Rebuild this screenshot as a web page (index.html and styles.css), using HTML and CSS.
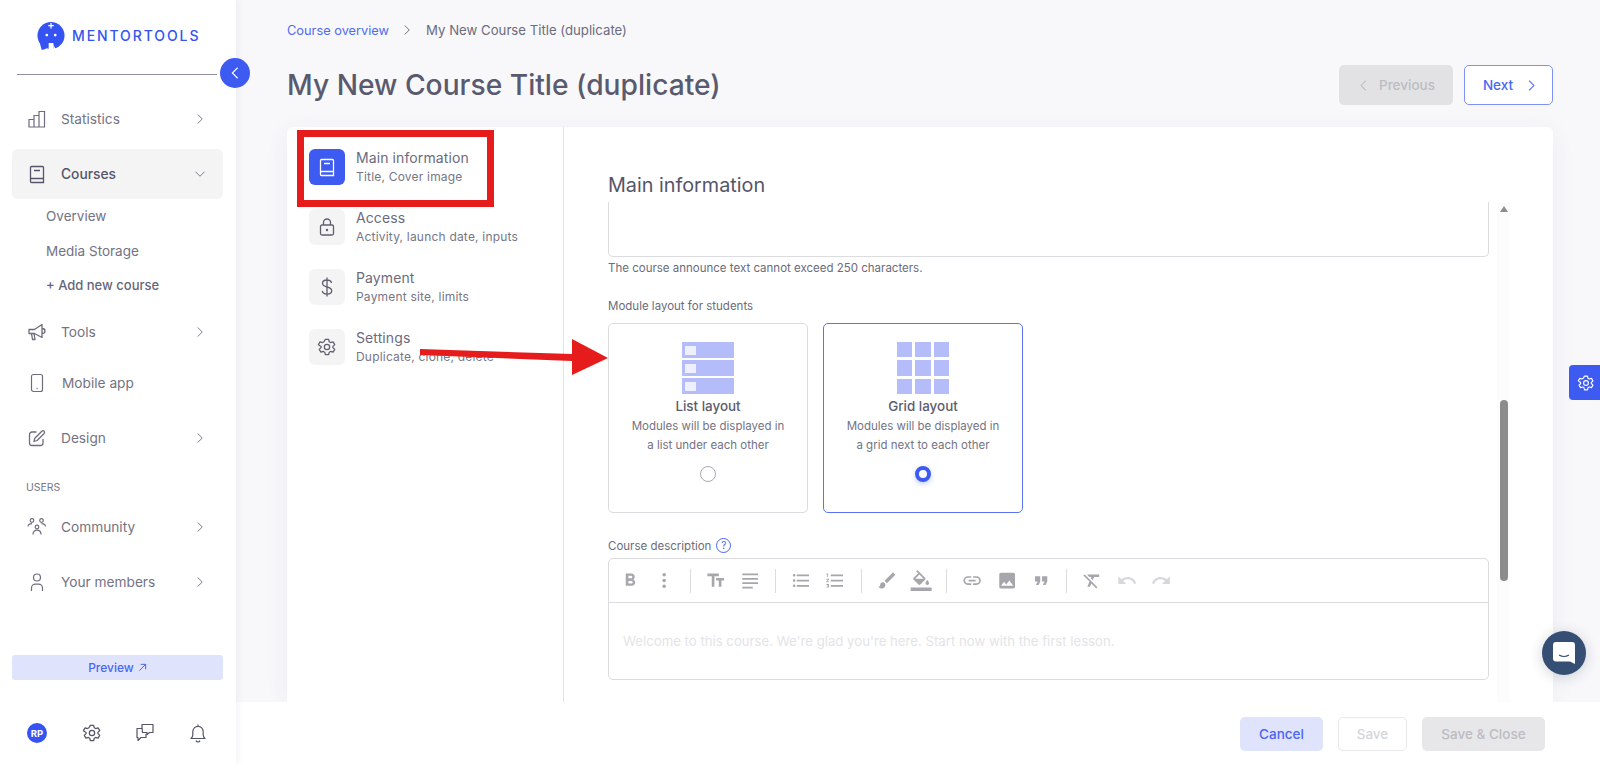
FILE: index.html
```html
<!DOCTYPE html>
<html lang="en">
<head>
    <meta charset="UTF-8">
    <meta name="viewport" content="width=device-width, initial-scale=1.0">
    <title>My New Course Title (duplicate)</title>
    <link rel="stylesheet" href="styles.css">
</head>
<body>
    <svg class="sprite" xmlns="http://www.w3.org/2000/svg">
        <symbol id="chev-right" viewBox="0 0 16 16"><path d="M5 2 11 8l-6 6" fill="none" stroke="currentColor" stroke-width="1.300"/></symbol>
        <symbol id="chev-left" viewBox="0 0 16 16"><path d="M11 2 5 8l6 6" fill="none" stroke="currentColor" stroke-width="1.300"/></symbol>
        <symbol id="chev-down" viewBox="0 0 16 16"><path d="M2 5 8 11l6-6" fill="none" stroke="currentColor" stroke-width="1.300"/></symbol>
        <symbol id="gear" viewBox="0 0 24 24"><g fill="none" stroke="currentColor" stroke-width="1.500" stroke-linejoin="round"><path d="M10 2.800h4l.7 2.900 1.700 1 2.900-.9 2 3.400-2.200 2.100v1.400l2.200 2.100-2 3.400-2.900-.9-1.700 1-.7 2.900h-4l-.7-2.900-1.700-1-2.900.9-2-3.400 2.200-2.100v-1.400L1.700 9.200l2-3.400 2.900.9 1.700-1z"/><circle cx="12" cy="12" r="3.200"/></g></symbol>
    </svg>

    <aside class="sidebar">
        <div class="logo-row">
            <svg class="logo-icon" viewBox="0 0 30 30" width="28" height="28">
                <circle cx="15" cy="14.500" r="14.500" fill="#3453f2"/>
                <path d="M2.500 20 L5 30 C10 29 12.500 27 13 24z" fill="#3453f2"/>
                <path d="M15 1v6M12 3.800h6" stroke="#fff" stroke-width="1.400"/>
                <circle cx="10.500" cy="14" r="1.500" fill="#fff"/>
                <circle cx="19.500" cy="14" r="1.500" fill="#fff"/>
                <path d="M12.500 22.500h5V30h-5z" fill="#fff"/>
                <path d="M17.500 22.500c.2 3 1.500 5 3 6.500l-3 1z" fill="#fff"/>
            </svg>
            <span class="logo-text">MENTORTOOLS</span>
        </div>
        <div class="side-rule"></div>

        <nav class="nav">
            <a class="nav-item">
                <svg class="nav-icon" viewBox="0 0 20 20"><path d="M2 10.500h5V18H2zM7 6.500h5V18H7zM12 2.500h5.500V18H12z" fill="none" stroke="currentColor" stroke-width="1.200"/></svg>
                <span class="nav-label">Statistics</span>
                <svg class="nav-chev"><use href="#chev-right"/></svg>
            </a>
            <a class="nav-item nav-item-open">
                <svg class="nav-icon" viewBox="0 0 20 20"><path d="M3.500 15.500V3.500a1 1 0 0 1 1-1h11a1 1 0 0 1 1 1v15h-12a1 1 0 0 1-1-1v-2a1 1 0 0 1 1-1h12M7 6.500h6" fill="none" stroke="currentColor" stroke-width="1.300"/></svg>
                <span class="nav-label">Courses</span>
                <svg class="nav-chev"><use href="#chev-down"/></svg>
            </a>
            <div class="sub-nav">
                <a class="sub-item">Overview</a>
                <a class="sub-item">Media Storage</a>
                <a class="sub-item sub-item-add">+ Add new course</a>
            </div>
            <a class="nav-item">
                <svg class="nav-icon" viewBox="0 0 20 20"><path d="M2 7.500h5.500L15 2.500v13l-7.500-4H2zM15 6.500c2 0 3 1 3 2.500s-1 2.500-3 2.500M4.500 11.500l1 6h2.500l-1-6" fill="none" stroke="currentColor" stroke-width="1.300" stroke-linejoin="round"/></svg>
                <span class="nav-label">Tools</span>
                <svg class="nav-chev"><use href="#chev-right"/></svg>
            </a>
            <a class="nav-item nav-item-short">
                <svg class="nav-icon" viewBox="0 0 20 20"><rect x="4.500" y="1.500" width="11" height="17" rx="2" fill="none" stroke="currentColor" stroke-width="1.200"/><circle cx="10" cy="15.500" r=".7" fill="currentColor"/></svg>
                <span class="nav-label nav-label-app">Mobile app</span>
            </a>
            <a class="nav-item">
                <svg class="nav-icon" viewBox="0 0 20 20"><path d="M9.500 4H5a2.500 2.500 0 0 0-2.500 2.500V15A2.500 2.500 0 0 0 5 17.500h8.500A2.500 2.500 0 0 0 16 15v-4M7 13.500l.8-3.300 7-7c.7-.7 1.700-.7 2.300 0 .6.700.6 1.600 0 2.300l-7 7z" fill="none" stroke="currentColor" stroke-width="1.300" stroke-linejoin="round"/></svg>
                <span class="nav-label">Design</span>
                <svg class="nav-chev"><use href="#chev-right"/></svg>
            </a>
            <div class="nav-section">USERS</div>
            <a class="nav-item">
                <svg class="nav-icon" viewBox="0 0 20 20"><g fill="none" stroke="currentColor" stroke-width="1.200"><circle cx="5" cy="3.500" r="1.800"/><circle cx="14.500" cy="3.500" r="1.800"/><circle cx="10" cy="10" r="1.800"/><path d="M1 9.500c.3-1.800 1.800-2.800 4-2.800M18.500 9.500c-.3-1.800-1.800-2.800-4-2.800M6 17.500c0-3 1.800-4.300 4-4.300s4 1.300 4 4.300"/></g></svg>
                <span class="nav-label">Community</span>
                <svg class="nav-chev"><use href="#chev-right"/></svg>
            </a>
            <a class="nav-item">
                <svg class="nav-icon" viewBox="0 0 20 20"><g fill="none" stroke="currentColor" stroke-width="1.200"><circle cx="10" cy="5.500" r="3.500"/><path d="M4.500 19v-3c0-2.200 1.800-3.800 4-3.800h3c2.200 0 4 1.600 4 3.800v3"/></g></svg>
                <span class="nav-label">Your members</span>
                <svg class="nav-chev"><use href="#chev-right"/></svg>
            </a>
        </nav>

        <a class="preview-btn">Preview
            <svg viewBox="0 0 10 10" width="9" height="9"><path d="M1.500 8.500l7-7M3 1.500h5.500V7" fill="none" stroke="currentColor" stroke-width="1.100"/></svg>
        </a>
        <div class="side-bottom">
            <span class="avatar">RP</span>
            <svg class="side-tool"><use href="#gear"/></svg>
            <svg class="side-tool" viewBox="0 0 20 20"><path d="M7 4V1.500h11v8h-3.500L12 11.500V9.500H7.500zM7.500 5.500h-5.500v9h1v3l3-3h5V11" fill="none" stroke="currentColor" stroke-width="1.200" stroke-linejoin="round"/></svg>
            <svg class="side-tool" viewBox="0 0 20 20"><path d="M3 15.500c1.200-1 1.800-2 1.800-3.500V8.500a5.200 5.200 0 0 1 10.400 0V12c0 1.500.6 2.500 1.800 3.500zM10 1.500v1.800M8 17.500c.3 1 1 1.500 2 1.500s1.700-.5 2-1.500" fill="none" stroke="currentColor" stroke-width="1.200" stroke-linejoin="round"/></svg>
        </div>
    </aside>
    <button class="collapse-btn"><svg><use href="#chev-left"/></svg></button>

    <div class="main">
        <div class="page">
            <div class="crumbs">
                <a class="crumb-link">Course overview</a>
                <svg class="crumb-chev"><use href="#chev-right"/></svg>
                <span>My New Course Title (duplicate)</span>
            </div>
            <div class="title-row">
                <h1>My New Course Title (duplicate)</h1>
                <button class="btn btn-prev"><svg><use href="#chev-left"/></svg>Previous</button>
                <button class="btn btn-next">Next<svg><use href="#chev-right"/></svg></button>
            </div>

            <div class="card">
                <div class="steps">
                    <div class="step step-active">
                        <span class="step-icon"><svg viewBox="0 0 20 20"><path d="M3.500 15.500V3.500a1 1 0 0 1 1-1h11a1 1 0 0 1 1 1v15h-12a1 1 0 0 1-1-1v-2a1 1 0 0 1 1-1h12M7 6.500h6" fill="none" stroke="currentColor" stroke-width="1.300"/></svg></span>
                        <div><div class="step-title">Main information</div><div class="step-sub">Title, Cover image</div></div>
                    </div>
                    <div class="step">
                        <span class="step-icon"><svg viewBox="0 0 20 20"><path d="M3.500 9.500a1.500 1.500 0 0 1 1.500-1.500h10a1.500 1.500 0 0 1 1.500 1.500v7a1.500 1.500 0 0 1-1.500 1.500H5a1.500 1.500 0 0 1-1.500-1.500zM6.500 8V5.500a3.500 3.500 0 0 1 7 0V8" fill="none" stroke="currentColor" stroke-width="1.300"/><circle cx="10" cy="13" r="1.200" fill="currentColor"/></svg></span>
                        <div><div class="step-title">Access</div><div class="step-sub">Activity, launch date, inputs</div></div>
                    </div>
                    <div class="step">
                        <span class="step-icon"><svg viewBox="0 0 20 20"><path d="M14.500 6c-.3-1.800-2-3-4.500-3S5.500 4.300 5.500 6.300 7.200 9.300 10 10s4.700 1.500 4.700 3.700-2 3.300-4.700 3.300-4.400-1.300-4.700-3.200M10 .5v19" fill="none" stroke="currentColor" stroke-width="1.300"/></svg></span>
                        <div><div class="step-title">Payment</div><div class="step-sub">Payment site, limits</div></div>
                    </div>
                    <div class="step">
                        <span class="step-icon"><svg><use href="#gear"/></svg></span>
                        <div><div class="step-title">Settings</div><div class="step-sub">Duplicate, clone, delete</div></div>
                    </div>
                </div>

                <div class="panel">
                    <h2>Main information</h2>
                    <div class="panel-body">
                        <div class="form">
                            <div class="announce"></div>
                            <p class="help">The course announce text cannot exceed 250 characters.</p>
                            <div class="field-label field-label-layout">Module layout for students</div>
                            <div class="layouts">
                                <div class="layout-card">
                                    <div class="pic-list">
                                        <span class="pic-row"><i></i></span>
                                        <span class="pic-row"><i></i></span>
                                        <span class="pic-row"><i></i></span>
                                    </div>
                                    <div class="layout-name">List layout</div>
                                    <div class="layout-text">Modules will be displayed in<br>a list under each other</div>
                                    <span class="radio"></span>
                                </div>
                                <div class="layout-card layout-card-on">
                                    <div class="pic-grid">
                                        <span></span><span></span><span></span>
                                        <span></span><span></span><span></span>
                                        <span></span><span></span><span></span>
                                    </div>
                                    <div class="layout-name">Grid layout</div>
                                    <div class="layout-text">Modules will be displayed in<br>a grid next to each other</div>
                                    <span class="radio radio-on"></span>
                                </div>
                            </div>
                            <div class="field-label field-label-desc">Course description <span class="hint">?</span></div>
                            <div class="editor">
                                <div class="toolbar">
                                    <svg class="tb" viewBox="0 0 24 24"><path d="M15.600 10.790c.97-.67 1.650-1.770 1.650-2.790 0-2.260-1.750-4-4-4H7v14h7.040c2.090 0 3.710-1.700 3.710-3.790 0-1.520-.86-2.820-2.150-3.420zM10 6.500h3c.83 0 1.500.67 1.500 1.500s-.67 1.500-1.500 1.500h-3v-3zm3.500 9H10v-3h3.500c.83 0 1.500.67 1.500 1.500s-.67 1.500-1.500 1.500z"/></svg>
                                    <svg class="tb" viewBox="0 0 24 24"><circle cx="12" cy="5.500" r="2"/><circle cx="12" cy="12" r="2"/><circle cx="12" cy="18.500" r="2"/></svg>
                                    <span class="tb-sep"></span>
                                    <svg class="tb" viewBox="0 0 24 24"><path d="M2 4v3h5v12h3V7h5V4H2zm10 8h3v7h3v-7h3V9h-9v3z"/></svg>
                                    <svg class="tb" viewBox="0 0 24 24"><path d="M3 4h18v2H3zM3 9h18v2H3zM3 14h18v2H3zM3 19h12v2H3z"/></svg>
                                    <span class="tb-sep"></span>
                                    <svg class="tb" viewBox="0 0 24 24"><path d="M4 10.500c-.83 0-1.500.67-1.500 1.500s.67 1.500 1.500 1.500 1.500-.67 1.500-1.500-.67-1.500-1.500-1.500zm0-6c-.83 0-1.500.67-1.500 1.500S3.170 7.500 4 7.500 5.500 6.830 5.500 6 4.830 4.500 4 4.500zm0 12c-.83 0-1.500.68-1.500 1.500s.68 1.500 1.500 1.500 1.500-.68 1.500-1.500-.67-1.500-1.500-1.500zM7 19h14v-2H7v2zm0-6h14v-2H7v2zm0-8v2h14V5H7z"/></svg>
                                    <svg class="tb" viewBox="0 0 24 24"><path d="M2 17h2v.5H3v1h1v.5H2v1h3v-4H2v1zm1-9h1V4H2v1h1v3zm-1 3h1.800L2 13.100v.9h3v-1H3.200L5 10.900V10H2v1zm5-6v2h14V5H7zm0 14h14v-2H7v2zm0-6h14v-2H7v2z"/></svg>
                                    <span class="tb-sep"></span>
                                    <svg class="tb" viewBox="0 0 24 24"><path d="M7 14c-1.660 0-3 1.340-3 3 0 1.310-1.160 2-2 2 .92 1.220 2.490 2 4 2 2.210 0 4-1.790 4-4 0-1.660-1.340-3-3-3zm13.710-9.370l-1.340-1.340c-.39-.39-1.020-.39-1.410 0L9 12.250 11.750 15l8.960-8.960c.39-.39.39-1.020 0-1.410z"/></svg>
                                    <svg class="tb" viewBox="0 0 24 24"><path d="M16.560 8.940L7.620 0 6.210 1.410l2.380 2.380-5.150 5.150c-.59.59-.59 1.540 0 2.120l5.500 5.500c.29.29.68.44 1.060.44s.77-.15 1.060-.44l5.500-5.500c.59-.58.59-1.530 0-2.120zM5.210 10L10 5.210 14.790 10H5.210zM19 11.500s-2 2.170-2 3.500c0 1.100.9 2 2 2s2-.9 2-2c0-1.330-2-3.500-2-3.500zM0 20h24v4H0z"/></svg>
                                    <span class="tb-sep"></span>
                                    <svg class="tb" viewBox="0 0 24 24"><path d="M3.900 12c0-1.710 1.390-3.100 3.100-3.100h4V7H7c-2.760 0-5 2.240-5 5s2.240 5 5 5h4v-1.900H7c-1.710 0-3.100-1.390-3.100-3.100zM8 13h8v-2H8v2zm9-6h-4v1.900h4c1.710 0 3.100 1.390 3.100 3.100s-1.390 3.100-3.100 3.100h-4V17h4c2.760 0 5-2.240 5-5s-2.240-5-5-5z"/></svg>
                                    <svg class="tb" viewBox="0 0 24 24"><path d="M21 19V5c0-1.100-.9-2-2-2H5c-1.100 0-2 .9-2 2v14c0 1.100.9 2 2 2h14c1.100 0 2-.9 2-2zM8.500 13.500l2.500 3.010L14.500 12l4.500 6H5l3.500-4.500z"/></svg>
                                    <svg class="tb" viewBox="0 0 24 24"><path d="M6 17h3l2-4V7H5v6h3zm8 0h3l2-4V7h-6v6h3z"/></svg>
                                    <span class="tb-sep"></span>
                                    <svg class="tb" viewBox="0 0 24 24"><path d="M3.270 5L2 6.270l6.970 6.970L6.500 19h3l1.570-3.660L16.730 21 18 19.730 3.550 5.270 3.270 5zM6 5v.18L8.820 8h2.400l-.72 1.680 2.100 2.100L14.210 8H20V5H6z"/></svg>
                                    <svg class="tb tb-off" viewBox="0 0 24 24"><path d="M12.500 8c-2.650 0-5.050.99-6.900 2.600L2 7v9h9l-3.620-3.620c1.390-1.160 3.160-1.880 5.120-1.880 3.540 0 6.550 2.310 7.600 5.500l2.370-.78C21.080 11.030 17.150 8 12.500 8z"/></svg>
                                    <svg class="tb tb-off" viewBox="0 0 24 24"><path d="M18.400 10.600C16.550 8.990 14.150 8 11.500 8c-4.650 0-8.580 3.030-9.960 7.220L3.900 16c1.050-3.190 4.050-5.500 7.600-5.500 1.950 0 3.730.72 5.120 1.880L13 16h9V7l-3.600 3.600z"/></svg>
                                </div>
                                <div class="editor-text">Welcome to this course. We're glad you're here. Start now with the first lesson.</div>
                            </div>
                        </div>
                        <div class="scrollbar">
                            <span class="scroll-up"></span>
                            <span class="scroll-thumb"></span>
                        </div>
                    </div>
                </div>
            </div>
        </div>

        <div class="footer">
            <button class="fbtn fbtn-cancel">Cancel</button>
            <button class="fbtn fbtn-save">Save</button>
            <button class="fbtn fbtn-close">Save &amp; Close</button>
        </div>
    </div>

    <!-- screenshot annotations -->
    <div class="mark-box"></div>
    <svg class="mark-arrow" viewBox="0 0 190 36" width="190" height="36"><path d="M0 10 L152 15 V0 L188 19 L152 36 V22 L0 16z" fill="#e61b1b"/></svg>

    <button class="gear-tab"><svg><use href="#gear"/></svg></button>
    <button class="chat-btn">
        <svg viewBox="0 0 22 22" width="22" height="22"><path d="M3 0h16a3 3 0 0 1 3 3v19l-5-2.500H3a3 3 0 0 1-3-3V3a3 3 0 0 1 3-3z" fill="#fff"/><path d="M6 13c3 1.800 7 1.800 10 0" fill="none" stroke="#354f74" stroke-width="1.200"/></svg>
    </button>
</body>
</html>
```

FILE: styles.css
```css
* {
    box-sizing: border-box;
}
html, body {
    height: 100%;
}
body {
    margin: 0;
    display: flex;
    overflow: hidden;
    position: relative;
    font-family: Inter, "Liberation Sans", sans-serif;
    font-size: 13px;
    color: #6b6b7b;
    background-color: #fff;
}
button {
    font-family: inherit;
    border: none;
    background: none;
    padding: 0;
}
.sprite {
    display: none;
}

/* sidebar */
.sidebar {
    width: 236px;
    flex-shrink: 0;
    height: 100%;
    padding: 0 13px 0 12px;
    display: flex;
    flex-direction: column;
    background-color: #fff;
    box-shadow: 2px 0 6px rgba(40, 40, 80, 0.06);
    position: relative;
    z-index: 2;
}
.logo-row {
    height: 74px;
    padding: 22px 0 0 25px;
    display: flex;
    align-items: flex-start;
    gap: 7px;
}
.logo-icon {
    flex-shrink: 0;
}
.logo-text {
    font-size: 14px;
    line-height: 28px;
    font-weight: 500;
    letter-spacing: 1.900px;
    color: #3453f2;
}
.side-rule {
    height: 1px;
    margin: 0 6px 0 5px;
    background-color: #8f8f9f;
}
.collapse-btn {
    position: absolute;
    left: 220px;
    top: 58px;
    width: 30px;
    height: 30px;
    border-radius: 50%;
    background-color: #3d5af1;
    color: #fff;
    z-index: 3;
    display: flex;
    align-items: center;
    justify-content: center;
}
.collapse-btn svg {
    width: 14px;
    height: 14px;
}
.nav {
    flex: 1;
    padding-top: 19px;
}
.nav-item {
    height: 50px;
    margin-bottom: 5px;
    padding: 0 17px 0 15px;
    display: flex;
    align-items: center;
    border-radius: 6px;
    color: #737384;
    font-size: 13.700px;
    line-height: 48px;
}
.nav-item-open {
    background-color: #f4f4f5;
    color: #55556a;
    font-weight: 500;
    font-size: 13.800px;
    margin-bottom: 0;
}
.nav-item-short {
    height: 46px;
    margin-top: -2px;
    margin-bottom: 7px;
}
.nav-icon {
    width: 20px;
    height: 20px;
    flex-shrink: 0;
    margin-right: 14px;
    color: #6d6d7e;
}
.nav-item-open .nav-icon {
    color: #55556a;
}
.nav-label {
    flex: 1;
}
.nav-label-app {
    margin-left: 1px;
}
.nav-chev {
    width: 12px;
    height: 12px;
    color: #77778a;
}
.sub-nav {
    padding: 0 0 4px 34px;
}
.sub-item {
    display: block;
    height: 34.500px;
    line-height: 34px;
    color: #737384;
    font-size: 13.500px;
}
.sub-item-add {
    font-weight: 500;
    font-size: 13px;
    color: #66667a;
}
.nav-section {
    height: 24px;
    margin-top: 15px;
    padding-left: 14px;
    line-height: 20px;
    font-size: 10.500px;
    color: #77778a;
}
.preview-btn {
    height: 25px;
    margin-bottom: 22px;
    display: flex;
    align-items: center;
    justify-content: center;
    gap: 4px;
    background-color: #dfe3fc;
    border-radius: 3px;
    color: #4a66f2;
    font-size: 12px;
    font-weight: 500;
}
.side-bottom {
    height: 62px;
    display: flex;
    align-items: center;
    padding-left: 15px;
    gap: 33px;
}
.avatar {
    width: 20px;
    height: 20px;
    border-radius: 50%;
    background-color: #3453f2;
    color: #fff;
    font-size: 9.500px;
    font-weight: 700;
    display: flex;
    align-items: center;
    justify-content: center;
    margin-right: 2px;
}
.side-tool {
    width: 20px;
    height: 20px;
    color: #55556a;
}

/* main area */
.main {
    flex: 1;
    min-width: 0;
    height: 100%;
    display: flex;
    flex-direction: column;
}
.page {
    height: 702px;
    padding: 0 47px 0 51px;
    background-color: #f8f8fb;
    display: flex;
    flex-direction: column;
}
.crumbs {
    height: 60px;
    display: flex;
    align-items: center;
    font-size: 13.200px;
    color: #6b6b7b;
}
.crumb-link {
    color: #4f6af3;
    font-size: 12.800px;
}
.crumb-chev {
    width: 12px;
    height: 12px;
    margin: 0 13px 0 12px;
    color: #6b6b7b;
}
.title-row {
    height: 67px;
    padding-top: 5px;
    display: flex;
    align-items: flex-start;
}
h1 {
    flex: 1;
    margin: 0;
    height: 40px;
    line-height: 40px;
    font-size: 28.200px;
    font-weight: 500;
    color: #5a5a6e;
}
.btn {
    height: 40px;
    border-radius: 5px;
    display: flex;
    align-items: center;
    justify-content: center;
    font-size: 13.500px;
    font-weight: 500;
}
.btn svg {
    width: 13px;
    height: 13px;
}
.btn-prev {
    width: 114px;
    margin-right: 11px;
    gap: 9px;
    background-color: #e2e2e5;
    color: #bcbcc2;
}
.btn-next {
    width: 89px;
    padding-left: 4px;
    gap: 12px;
    background-color: #fff;
    border: 1px solid #7f90f6;
    color: #4a66f2;
}
.card {
    flex: 1;
    min-height: 0;
    display: flex;
    background-color: #fff;
    border-radius: 6px 6px 0 0;
    box-shadow: 0 4px 24px rgba(60, 60, 110, 0.06);
}
.steps {
    width: 277px;
    flex-shrink: 0;
    padding: 22px 0 0 22px;
    border-right: 1px solid #e3e3e7;
}
.step {
    height: 60px;
    display: flex;
    gap: 11px;
}
.step-icon {
    width: 36px;
    height: 36px;
    flex-shrink: 0;
    border-radius: 6px;
    background-color: #f4f4f5;
    color: #5f5f70;
    display: flex;
    align-items: center;
    justify-content: center;
}
.step-icon svg {
    width: 20px;
    height: 20px;
}
.step-active .step-icon {
    background-color: #3d5af1;
    color: #fff;
}
.step-title {
    font-size: 14px;
    line-height: 17px;
    color: #6b6b7d;
    letter-spacing: 0.1px;
}
.step-sub {
    margin-top: 4px;
    font-size: 12px;
    line-height: 14px;
    letter-spacing: 0.2px;
    color: #767686;
}
.panel {
    flex: 1;
    min-width: 0;
    display: flex;
    flex-direction: column;
}
h2 {
    margin: 0;
    height: 75px;
    padding: 45px 0 0 44px;
    font-size: 19.800px;
    line-height: 26px;
    font-weight: 400;
    color: #55556a;
}
.panel-body {
    flex: 1;
    min-height: 0;
    display: flex;
}
.form {
    width: 925px;
    padding-left: 44px;
}
.announce {
    height: 55px;
    border: 1px solid #dcdce0;
    border-top: none;
    border-radius: 0 0 5px 5px;
}
.help {
    margin: 4px 0 0;
    font-size: 11.500px;
    line-height: 14px;
    color: #6b6b7b;
}
.field-label {
    font-size: 11.500px;
    line-height: 14px;
    color: #6b6b7b;
}
.field-label-layout {
    margin-top: 24px;
}
.layouts {
    margin-top: 10px;
    display: flex;
    gap: 15px;
}
.layout-card {
    width: 200px;
    height: 190px;
    padding-top: 18px;
    border: 1px solid #dcdce0;
    border-radius: 5px;
    display: flex;
    flex-direction: column;
    align-items: center;
}
.layout-card-on {
    border-color: #5a73f4;
}
.pic-list {
    width: 52px;
    height: 52px;
    display: grid;
    grid-template-rows: repeat(3, 1fr);
    gap: 2px;
}
.pic-row {
    background-color: #b4bdfa;
    padding: 3px;
    display: flex;
    align-items: center;
}
.pic-row i {
    display: block;
    width: 11px;
    height: 9px;
    background-color: #eef0fd;
}
.pic-grid {
    width: 52px;
    height: 52px;
    display: grid;
    grid-template-columns: repeat(3, 1fr);
    grid-template-rows: repeat(3, 1fr);
    gap: 3px;
}
.pic-grid span {
    background-color: #b4bdfa;
}
.layout-name {
    margin-top: 2px;
    font-size: 13.400px;
    line-height: 20px;
    font-weight: 500;
    color: #5c5c6e;
}
.layout-text {
    margin-top: 1px;
    text-align: center;
    font-size: 11.500px;
    line-height: 19px;
    color: #737384;
}
.radio {
    width: 16px;
    height: 16px;
    margin-top: 11px;
    border-radius: 50%;
    border: 1px solid #a9a9b2;
    background-color: #fff;
}
.radio-on {
    border: 4.500px solid #3d5af1;
    box-shadow: 0 2px 5px rgba(61, 90, 241, 0.3);
}
.field-label-desc {
    margin-top: 25px;
    display: flex;
    align-items: center;
    gap: 5px;
}
.hint {
    width: 15px;
    height: 15px;
    border-radius: 50%;
    border: 1px solid #4a66f2;
    color: #4a66f2;
    font-size: 10px;
    line-height: 13px;
    text-align: center;
}
.editor {
    height: 122px;
    margin-top: 5px;
    border: 1px solid #dcdce0;
    border-radius: 5px;
}
.toolbar {
    height: 44px;
    padding-left: 4px;
    display: flex;
    align-items: center;
    border-bottom: 1px solid #dcdce0;
}
.tb {
    width: 34.300px;
    height: 21px;
    fill: #a6a6ac;
}
.tb-off {
    fill: #d8d8dc;
}
.tb-sep {
    width: 1px;
    height: 24px;
    margin: 0 8px;
    background-color: #dcdce0;
}
.editor-text {
    padding: 30px 14px 0;
    font-size: 13.200px;
    line-height: 16px;
    color: #e4e4e7;
}
.scrollbar {
    width: 13px;
    margin-left: 8px;
    background-color: #fcfcfc;
    display: flex;
    flex-direction: column;
    align-items: center;
}
.scroll-up {
    width: 0;
    height: 0;
    margin-top: 4px;
    border-left: 4px solid transparent;
    border-right: 4px solid transparent;
    border-bottom: 6px solid #8c8c8c;
}
.scroll-thumb {
    width: 8px;
    height: 181px;
    margin-top: 188px;
    border-radius: 4px;
    background-color: #8c8c8c;
}

/* footer */
.footer {
    flex: 1;
    padding: 15px 55px 0 0;
    display: flex;
    justify-content: flex-end;
    align-items: flex-start;
    gap: 15px;
    background-color: #fff;
}
.fbtn {
    height: 34px;
    border-radius: 5px;
    font-size: 13.500px;
    font-weight: 500;
}
.fbtn-cancel {
    width: 83px;
    background-color: #dfe3fc;
    color: #4a66f2;
}
.fbtn-save {
    width: 69px;
    border: 1px solid #e8e8ea;
    color: #d5d5d9;
}
.fbtn-close {
    width: 123px;
    background-color: #e7e7e9;
    color: #bcbcc2;
}

/* things floating over the page */
.mark-box {
    position: absolute;
    left: 297px;
    top: 130px;
    width: 197px;
    height: 77px;
    border: 7px solid #e61b1b;
    z-index: 4;
}
.mark-arrow {
    position: absolute;
    left: 420px;
    top: 339px;
    z-index: 4;
}
.gear-tab {
    position: absolute;
    right: 0;
    top: 365px;
    width: 31px;
    height: 35px;
    padding-left: 3px;
    border-radius: 4px 0 0 4px;
    background-color: #3d5af1;
    color: #fff;
    display: flex;
    align-items: center;
    justify-content: center;
}
.gear-tab svg {
    width: 18px;
    height: 18px;
}
.chat-btn {
    position: absolute;
    left: 1542px;
    top: 631px;
    width: 44px;
    height: 44px;
    border-radius: 50%;
    background-color: #354f74;
    box-shadow: 0 2px 14px rgba(30, 40, 70, 0.2);
    display: flex;
    align-items: center;
    justify-content: center;
}
```
